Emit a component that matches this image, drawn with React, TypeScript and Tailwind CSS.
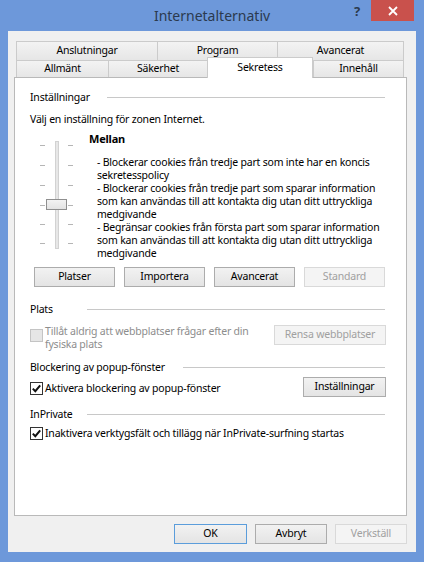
import React from "react";

function Check({ checked = false, disabled = false }: { checked?: boolean; disabled?: boolean }) {
  return (
    <div
      className={
        "w-[13px] h-[13px] shrink-0 border flex items-center justify-center " +
        (disabled ? "border-[#c4c4c4] bg-[#e6e6e6]" : "border-[#333333] bg-white")
      }
    >
      {checked && (
        <svg width="11" height="11" viewBox="0 0 11 11">
          <path d="M1.8 5.6 L4.3 8.2 L9.2 2.4" fill="none" stroke="#111" strokeWidth="2" />
        </svg>
      )}
    </div>
  );
}

function Btn({
  label,
  w,
  disabled = false,
  def = false,
}: {
  label: string;
  w: string;
  disabled?: boolean;
  def?: boolean;
}) {
  return (
    <div
      className={
        w +
        " h-[20px] shrink-0 flex items-center justify-center border " +
        (disabled
          ? "border-[#d9d9d9] bg-[#f4f4f4] text-[#a0a0a0]"
          : def
          ? "border-[#5b9ddb] bg-gradient-to-b from-[#f2f2f2] to-[#e4e4e4] text-black"
          : "border-[#acacac] bg-gradient-to-b from-[#f2f2f2] to-[#e4e4e4] text-black")
      }
    >
      {label}
    </div>
  );
}

function Group({ label, line }: { label: string; line: string }) {
  return (
    <div className="h-[15px] leading-[15px] flex items-center justify-between">
      <span>{label}</span>
      <div className={line + " h-px bg-[#c8c8c8]"} />
    </div>
  );
}

function Tab({ label, w, last = false }: { label: string; w: string; last?: boolean }) {
  return (
    <div
      className={
        w +
        " h-full flex items-center justify-center border-t border-l border-[#cbcbcb] bg-gradient-to-b from-[#f3f3f3] to-[#e6e6e6] " +
        (last ? "border-r" : "")
      }
    >
      {label}
    </div>
  );
}

function Slider() {
  const ticks = [8, 28, 48, 68, 87, 106];
  return (
    <svg width="46" height="116" viewBox="0 0 46 116">
      {ticks.map((y) => (
        <g key={y}>
          <line x1="8" y1={y + 0.5} x2="13" y2={y + 0.5} stroke="#b5b5b5" strokeWidth="1" />
          <line x1="36" y1={y + 0.5} x2="41" y2={y + 0.5} stroke="#b5b5b5" strokeWidth="1" />
        </g>
      ))}
      <rect x="23.5" y="4.5" width="3" height="107" fill="#e7e7e7" stroke="#d2d2d2" />
      <defs>
        <linearGradient id="th" x1="0" y1="0" x2="0" y2="1">
          <stop offset="0" stopColor="#f3f3f3" />
          <stop offset="1" stopColor="#e2e2e2" />
        </linearGradient>
      </defs>
      <rect x="14.5" y="62.5" width="20" height="10" fill="url(#th)" stroke="#8f8f8f" />
    </svg>
  );
}

export default function App() {
  const desc = [
    "- Blockerar cookies från tredje part som inte har en koncis",
    "sekretesspolicy",
    "- Blockerar cookies från tredje part som sparar information",
    "som kan användas till att kontakta dig utan ditt uttryckliga",
    "medgivande",
    "- Begränsar cookies från första part som sparar information",
    "som kan användas till att kontakta dig utan ditt uttryckliga",
    "medgivande",
  ];
  return (
    <div className="w-[424px] h-[562px] bg-[#6d98da] flex flex-col font-['Noto_Sans',sans-serif] text-[10.5px] tracking-[-0.2px] text-black overflow-hidden">
      {/* Title bar */}
      <div className="h-[31px] shrink-0 grid grid-cols-[1fr_auto_1fr]">
        <div />
        <div className="pt-[6px] text-[14px] leading-[20px] tracking-[0px] text-[#2b3a4e]">Internetalternativ</div>
        <div className="flex justify-end items-start pr-[10px]">
          <div className="mt-[4px] mr-[11px] text-[13px] leading-[14px] font-bold text-[#2b3a4e]">?</div>
          <div className="w-[43px] h-[21px] bg-[#c9514c] flex items-center justify-center">
            <svg width="10" height="10" viewBox="0 0 10 10">
              <path d="M1 1 L9 9 M9 1 L1 9" stroke="#ffffff" strokeWidth="1.8" />
            </svg>
          </div>
        </div>
      </div>

      {/* Client */}
      <div className="mx-[8px] h-[521px] shrink-0 bg-[#f0f0f0] flex flex-col pl-[6px] pr-[9px]">
        {/* Tabs */}
        <div className="pt-[10px] pl-[2px] pr-[3px] flex flex-col">
          <div className="h-[19px] flex">
            <Tab label="Anslutningar" w="w-[141px]" />
            <Tab label="Program" w="w-[120px]" />
            <Tab label="Avancerat" w="w-[127px]" last />
          </div>
          <div className="h-[17px] flex items-start">
            <Tab label="Allmänt" w="w-[92px]" />
            <Tab label="Säkerhet" w="w-[99px]" />
            <div className="w-[106px] h-[21px] -mt-[3px] relative z-10 flex items-center justify-center bg-white border-t border-l border-r border-[#cbcbcb]">
              Sekretess
            </div>
            <Tab label="Innehåll" w="w-[91px]" last />
          </div>
        </div>

        {/* Panel */}
        <div className="h-[439px] shrink-0 bg-white border border-[#b9b9b9] flex flex-col pl-[15px] pr-[21px] pt-[12px]">
          <Group label="Inställningar" line="w-[278px]" />
          <div className="mt-[7px] h-[15px] leading-[15px]">Välj en inställning för zonen Internet.</div>

          <div className="mt-[4px] flex">
            <div className="w-[59px] shrink-0">
              <div className="mt-[6px] ml-[2px]">
                <Slider />
              </div>
            </div>
            <div className="flex flex-col">
              <div className="h-[15px] leading-[15px] font-bold text-[11px]">Mellan</div>
              <div className="mt-[10px] pl-[8px] flex flex-col">
                {desc.map((d, i) => (
                  <div key={i} className="h-[13px] leading-[13px] whitespace-nowrap">
                    {d}
                  </div>
                ))}
              </div>
            </div>
          </div>

          <div className="mt-[7px] h-[20px] pl-[4px] flex justify-between">
            <Btn label="Platser" w="w-[81px]" />
            <Btn label="Importera" w="w-[81px]" />
            <Btn label="Avancerat" w="w-[81px]" />
            <Btn label="Standard" w="w-[81px]" disabled />
          </div>

          <div className="mt-[15px]">
            <Group label="Plats" line="w-[298px]" />
          </div>
          <div className="mt-[7px] h-[27px] flex justify-between items-start">
            <div className="flex items-start">
              <div className="mt-[5px]">
                <Check disabled />
              </div>
              <div className="ml-[2px] pt-[1px] leading-[13px] text-[#8d8d8d]">
                <div>Tillåt aldrig att webbplatser frågar efter din</div>
                <div>fysiska plats</div>
              </div>
            </div>
            <div className="mt-[1px] -mr-[1px]">
              <Btn label="Rensa webbplatser" w="w-[112px]" disabled />
            </div>
          </div>

          <div className="mt-[9px]">
            <Group label="Blockering av popup-fönster" line="w-[202px]" />
          </div>
          <div className="mt-[2px] h-[20px] flex justify-between items-start">
            <div className="mt-[4px] h-[15px] flex items-center">
              <Check checked />
              <span className="ml-[2px]">Aktivera blockering av popup-fönster</span>
            </div>
            <div className="-mr-[1px]">
              <Btn label="Inställningar" w="w-[83px]" />
            </div>
          </div>

          <div className="mt-[10px]">
            <Group label="InPrivate" line="w-[298px]" />
          </div>
          <div className="mt-[4px] h-[15px] flex items-center">
            <Check checked />
            <span className="ml-[2px]">Inaktivera verktygsfält och tillägg när InPrivate-surfning startas</span>
          </div>
        </div>

        {/* Footer */}
        <div className="pt-[8px] flex justify-end gap-[8px]">
          <Btn label="OK" w="w-[73px]" def />
          <Btn label="Avbryt" w="w-[72px]" />
          <Btn label="Verkställ" w="w-[72px]" disabled />
        </div>
      </div>
    </div>
  );
}
